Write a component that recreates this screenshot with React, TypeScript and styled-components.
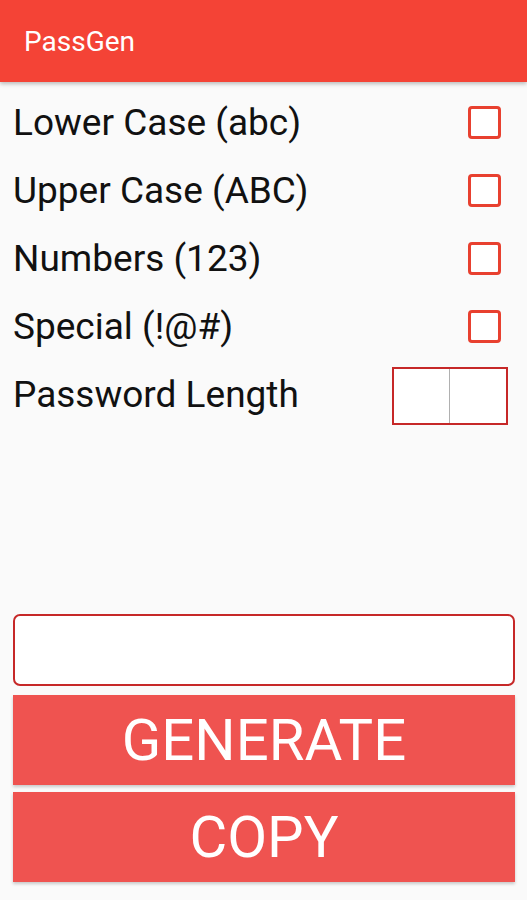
import React from "react";
import styled, { createGlobalStyle } from "styled-components";

const Global = createGlobalStyle`
  html, body { margin: 0; padding: 0; background: #fafafa; }
  body { font-family: Roboto, "Noto Sans", Arial, sans-serif; }
  * { box-sizing: border-box; }
`;

const Page = styled.div`
  min-height: 100vh;
  display: flex;
  flex-direction: column;
  background: #fafafa;
`;

const AppBar = styled.header`
  height: 82px;
  background: #f44336;
  display: flex;
  align-items: center;
  padding-left: 24px;
  box-shadow: 0 2px 4px rgba(0, 0, 0, 0.25);
  position: relative;
  z-index: 1;
`;

const Title = styled.h1`
  margin: 0;
  font-size: 28px;
  font-weight: 400;
  color: #fff;
`;

const Options = styled.div`
  display: flex;
  flex-direction: column;
  padding: 6px 18px 0 13px;
`;

const Row = styled.div`
  height: 68px;
  display: flex;
  align-items: center;
  justify-content: space-between;
`;

const Label = styled.span`
  font-size: 37px;
  color: #111;
  font-weight: 400;
`;

const Check = styled.span`
  width: 33px;
  height: 33px;
  border: 3px solid #e8402f;
  border-radius: 4px;
  margin-right: 8px;
  background: #fff;
`;

const LengthBox = styled.div`
  width: 116px;
  height: 58px;
  border: 2px solid #c62828;
  display: grid;
  grid-template-columns: 1fr 1fr;
  margin-right: 1px;
  margin-top: 4px;
  background: #fff;
`;

const LengthCell = styled.span<{ $divider?: boolean }>`
  border-right: ${(p) => (p.$divider ? "1px solid #b0b0b0" : "none")};
`;

const Bottom = styled.div`
  margin-top: auto;
  display: flex;
  flex-direction: column;
  padding: 0 12px 18px 13px;
`;

const Output = styled.div`
  height: 72px;
  border: 2px solid #c62828;
  border-radius: 7px;
  background: #fff;
  margin-bottom: 9px;
`;

const ActionButton = styled.button<{ $gap?: number }>`
  height: 90px;
  border: none;
  border-radius: 0;
  background: #ef5350;
  color: #fff;
  font-family: Roboto, "Noto Sans", Arial, sans-serif;
  font-size: 58px;
  font-weight: 400;
  padding: 0;
  box-shadow: 0 2px 3px rgba(0, 0, 0, 0.2);
  margin-bottom: ${(p) => p.$gap ?? 0}px;
`;

const options = [
  "Lower Case (abc)",
  "Upper Case (ABC)",
  "Numbers (123)",
  "Special (!@#)",
];

export default function App() {
  return (
    <Page>
      <Global />
      <AppBar>
        <Title>PassGen</Title>
      </AppBar>
      <Options>
        {options.map((o) => (
          <Row key={o}>
            <Label>{o}</Label>
            <Check />
          </Row>
        ))}
        <Row>
          <Label>Password Length</Label>
          <LengthBox>
            <LengthCell $divider />
            <LengthCell />
          </LengthBox>
        </Row>
      </Options>
      <Bottom>
        <Output />
        <ActionButton $gap={7}>GENERATE</ActionButton>
        <ActionButton>COPY</ActionButton>
      </Bottom>
    </Page>
  );
}
